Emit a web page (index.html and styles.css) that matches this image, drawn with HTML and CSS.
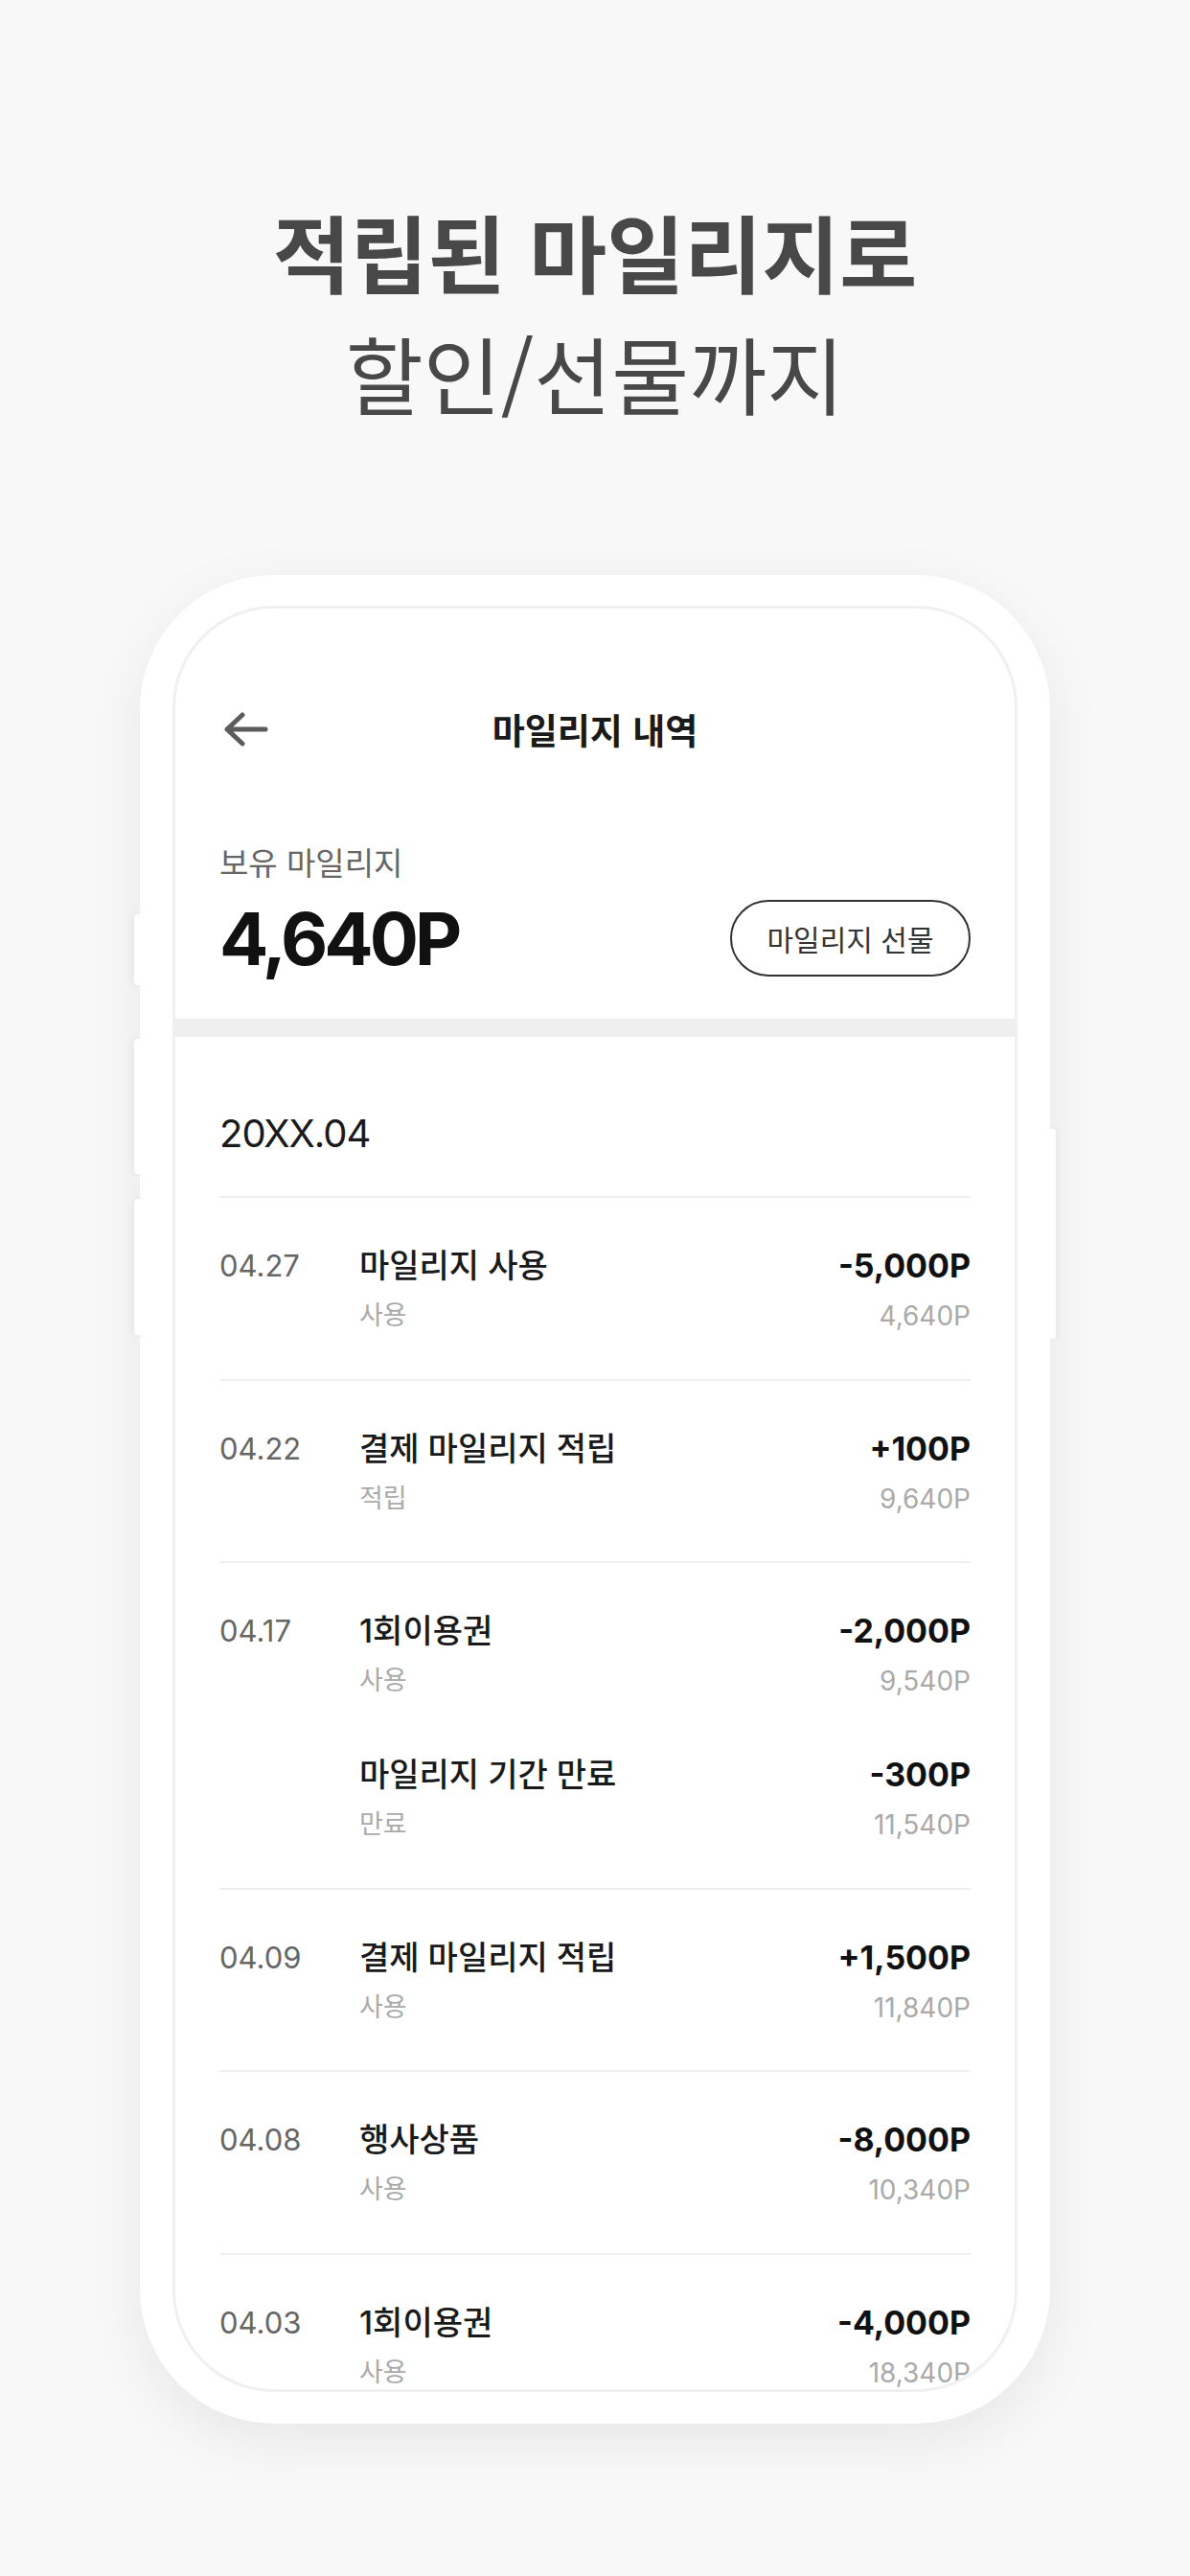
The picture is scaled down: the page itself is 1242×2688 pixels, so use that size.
FILE: index.html
```html
<!DOCTYPE html>
<html lang="ko">
<head>
<meta charset="utf-8">
<title>마일리지 내역</title>
<link rel="stylesheet" href="styles.css">
</head>
<body>
<div class="page">
  <header class="hero">
    <h1 class="hero-title">적립된 마일리지로</h1>
    <p class="hero-sub">할인/선물까지</p>
  </header>

  <div class="phone">
    <span class="side-btn side-left b1"></span>
    <span class="side-btn side-left b2"></span>
    <span class="side-btn side-left b3"></span>
    <span class="side-btn side-right b4"></span>

    <div class="screen">
      <div class="topbar">
        <svg class="back" width="56" height="40" viewBox="0 0 56 40" aria-hidden="true">
          <path d="M24 5 L8 20 L24 35 M8 20 H48" fill="none" stroke="#5c5c5c" stroke-width="5" stroke-linecap="round" stroke-linejoin="round"/>
        </svg>
        <h2 class="topbar-title">마일리지 내역</h2>
        <span class="topbar-spacer"></span>
      </div>

      <section class="balance">
        <div class="balance-label">보유 마일리지</div>
        <div class="balance-row">
          <div class="balance-value">4,640P</div>
          <button class="gift-btn" type="button">마일리지 선물</button>
        </div>
      </section>

      <div class="band"></div>

      <section class="history">
        <div class="month">20XX.04</div>

        <div class="row">
          <div class="date">04.27</div>
          <div class="entries">
            <div class="entry">
              <div class="line"><span class="name">마일리지 사용</span><span class="amt">-5,000P</span></div>
              <div class="line sub"><span class="kind">사용</span><span class="rest">4,640P</span></div>
            </div>
          </div>
        </div>

        <div class="row">
          <div class="date">04.22</div>
          <div class="entries">
            <div class="entry">
              <div class="line"><span class="name">결제 마일리지 적립</span><span class="amt">+100P</span></div>
              <div class="line sub"><span class="kind">적립</span><span class="rest">9,640P</span></div>
            </div>
          </div>
        </div>

        <div class="row">
          <div class="date">04.17</div>
          <div class="entries">
            <div class="entry">
              <div class="line"><span class="name">1회이용권</span><span class="amt">-2,000P</span></div>
              <div class="line sub"><span class="kind">사용</span><span class="rest">9,540P</span></div>
            </div>
            <div class="entry">
              <div class="line"><span class="name">마일리지 기간 만료</span><span class="amt">-300P</span></div>
              <div class="line sub"><span class="kind">만료</span><span class="rest">11,540P</span></div>
            </div>
          </div>
        </div>

        <div class="row">
          <div class="date">04.09</div>
          <div class="entries">
            <div class="entry">
              <div class="line"><span class="name">결제 마일리지 적립</span><span class="amt">+1,500P</span></div>
              <div class="line sub"><span class="kind">사용</span><span class="rest">11,840P</span></div>
            </div>
          </div>
        </div>

        <div class="row">
          <div class="date">04.08</div>
          <div class="entries">
            <div class="entry">
              <div class="line"><span class="name">행사상품</span><span class="amt">-8,000P</span></div>
              <div class="line sub"><span class="kind">사용</span><span class="rest">10,340P</span></div>
            </div>
          </div>
        </div>

        <div class="row">
          <div class="date">04.03</div>
          <div class="entries">
            <div class="entry">
              <div class="line"><span class="name">1회이용권</span><span class="amt">-4,000P</span></div>
              <div class="line sub"><span class="kind">사용</span><span class="rest">18,340P</span></div>
            </div>
          </div>
        </div>
      </section>
    </div>
  </div>
</div>
</body>
</html>
```

FILE: styles.css
```css
* { box-sizing: border-box; }

html, body {
  margin: 0;
  padding: 0;
}

body {
  width: 1242px;
  height: 2688px;
  overflow: hidden;
  background: #f8f8f8;
  font-family: "Inter", "Noto Sans CJK KR", sans-serif;
  color: #1a1a1a;
}

/* ---------- hero ---------- */
.hero {
  padding-top: 199px;
  text-align: center;
  color: #484848;
  font-family: "Noto Sans CJK KR", sans-serif;
}

.hero-title {
  margin: 0;
  font-size: 88px;
  font-weight: 700;
  line-height: 124px;
}

.hero-sub {
  margin: 0;
  font-size: 88px;
  font-weight: 400;
  line-height: 130px;
}

/* ---------- phone ---------- */
.phone {
  position: relative;
  width: 950px;
  height: 1929px;
  margin: 147px auto 0;
  padding: 32px 34px 33px;
  background: #fff;
  border-radius: 140px;
  box-shadow: 0 18px 60px rgba(0, 0, 0, 0.07);
}

.side-btn {
  position: absolute;
  width: 14px;
  background: #fff;
  border-radius: 4px;
}
.side-left { left: -6px; box-shadow: -3px 0 6px rgba(0, 0, 0, 0.04); }
.side-right { right: -6px; box-shadow: 3px 0 6px rgba(0, 0, 0, 0.04); }
.b1 { top: 354px; height: 74px; }
.b2 { top: 484px; height: 141px; }
.b3 { top: 651px; height: 142px; }
.b4 { top: 578px; height: 219px; }

.screen {
  height: 100%;
  border: 3px solid #f0f0f0;
  border-radius: 106px;
  overflow: hidden;
  background: #fff;
}

/* ---------- top bar ---------- */
.topbar {
  margin-top: 76px;
  height: 100px;
  padding: 0 46px;
  display: grid;
  grid-template-columns: 1fr auto 1fr;
  align-items: center;
}

.back { display: block; }

.topbar-title {
  margin: 0;
  font-family: "Noto Sans CJK KR", sans-serif;
  font-size: 37px;
  font-weight: 700;
  line-height: 50px;
  color: #1a1a1a;
}

/* ---------- balance ---------- */
.balance {
  padding: 68px 46px 44px;
}

.balance-label {
  font-family: "Noto Sans CJK KR", sans-serif;
  font-size: 33px;
  line-height: 40px;
  color: #666;
}

.balance-row {
  margin-top: 20px;
  height: 80px;
  display: flex;
  justify-content: space-between;
  align-items: center;
}

.balance-value {
  font-size: 76px;
  font-weight: 700;
  line-height: 80px;
  letter-spacing: -4px;
  color: #111;
}

.gift-btn {
  width: 251px;
  height: 80px;
  border: 2.5px solid #333;
  border-radius: 40px;
  background: #fff;
  font-family: "Noto Sans CJK KR", sans-serif;
  font-size: 30px;
  color: #333;
  padding: 0;
}

.band {
  height: 19px;
  background: #efefef;
}

/* ---------- history ---------- */
.history {
  padding: 0 46px;
}

.month {
  padding: 76px 0 40px;
  font-size: 40px;
  line-height: 50px;
  letter-spacing: -1px;
  color: #1a1a1a;
}

.row {
  border-top: 2px solid #efefef;
  padding: 47px 0 45.5px;
  display: grid;
  grid-template-columns: 146px 1fr;
}

.date {
  font-size: 31px;
  line-height: 48px;
  color: #666;
}

.entries {
  display: flex;
  flex-direction: column;
  gap: 54px;
}

.line {
  display: flex;
  justify-content: space-between;
  align-items: center;
}

.name {
  font-size: 34px;
  font-weight: 500;
  line-height: 48px;
  color: #1a1a1a;
}

.amt {
  font-size: 34px;
  font-weight: 700;
  line-height: 48px;
  color: #111;
}

.sub {
  margin-top: 8px;
  height: 40px;
}

.kind {
  font-size: 27px;
  line-height: 40px;
  color: #aaa;
}

.rest {
  font-size: 28px;
  line-height: 40px;
  color: #aaa;
}
```
